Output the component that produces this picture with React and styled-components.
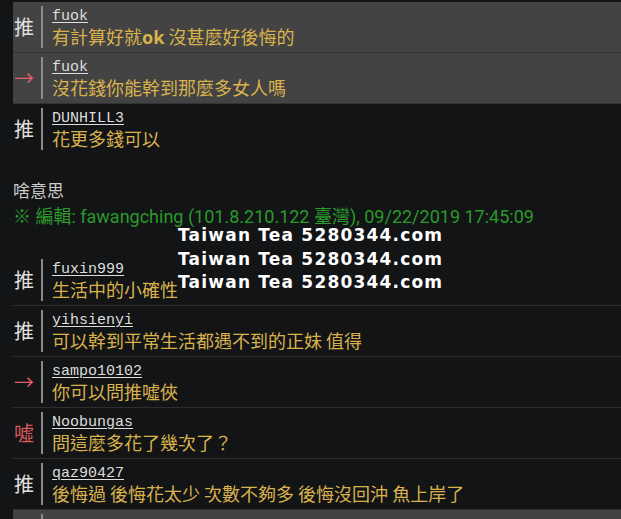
import React from "react";
import styled, { createGlobalStyle } from "styled-components";

const Global = createGlobalStyle`
  html, body { margin: 0; padding: 0; background: #131416; }
  body { overflow: hidden; }
`;

const Page = styled.div`
  position: relative;
  width: 621px;
  height: 519px;
  overflow: hidden;
  padding: 2px 0 0 13px;
  box-sizing: border-box;
  background: #131416;
  font-family: "Noto Sans CJK TC", "Noto Sans", sans-serif;
`;

const Row = styled.div`
  display: flex;
  height: 50px;
  background: ${(p) => (p.$hl ? "#434343" : "transparent")};
  border-bottom: 1px solid ${(p) => (p.$last ? "transparent" : p.$hl ? "#333333" : "#2e2e2e")};
`;

const Tag = styled.div`
  width: 28px;
  display: flex;
  align-items: center;
  padding-left: 1px;
  box-sizing: border-box;
  font-size: 20px;
  line-height: 1;
  color: ${(p) => p.$color};
  font-family: "Noto Sans CJK TC", sans-serif;
`;

const Bar = styled.div`
  width: 2px;
  margin: 4px 0;
  background: #8a8a8a;
`;

const Body = styled.div`
  display: flex;
  flex-direction: column;
  padding: 6px 0 0 9px;
`;

const User = styled.span`
  font-family: "Liberation Mono", monospace;
  font-size: 15px;
  line-height: 17px;
  color: #dddddd;
  text-decoration: underline;
  text-underline-offset: 2px;
  align-self: flex-start;
`;

const Comment = styled.span`
  font-family: "Noto Sans CJK TC", sans-serif;
  font-size: 18px;
  line-height: 23px;
  color: #d9b24c;
  white-space: nowrap;
  b { font-family: "Noto Sans", sans-serif; font-weight: 700; }
`;

const Content = styled.div`
  height: 100px;
  box-sizing: border-box;
  padding-top: 22px;
  font-size: 17px;
  line-height: 26px;
  color: #cccccc;
`;

const EditLine = styled.div`
  font-family: Roboto, "Noto Sans CJK TC", sans-serif;
  font-size: 18px;
  line-height: 27px;
  color: #2a9a2a;
  white-space: nowrap;
`;

const Watermark = styled.div`
  position: absolute;
  left: 178px;
  top: 224px;
  font-family: "DejaVu Sans", sans-serif;
  font-weight: 700;
  font-size: 17px;
  line-height: 23.5px;
  letter-spacing: 1.2px;
  color: #ffffff;
  white-space: nowrap;
`;

const TAGS = {
  push: { t: "推", c: "#e0e0e0" },
  arrow: { t: "→", c: "#e0606a" },
  boo: { t: "噓", c: "#d85a5a" },
  none: { t: "", c: "#e0e0e0" },
};

function Push({ type, user, text, hl, last }) {
  const tg = TAGS[type];
  return (
    <Row $hl={hl} $last={last}>
      <Tag $color={tg.c}>{tg.t}</Tag>
      <Bar />
      <Body>
        {user ? <User>{user}</User> : null}
        {text ? <Comment>{text}</Comment> : null}
      </Body>
    </Row>
  );
}

export default function App() {
  return (
    <>
      <Global />
      <Page>
        <Push type="push" hl user="fuok" text={<>有計算好就<b>ok</b> 沒甚麼好後悔的</>} />
        <Push type="arrow" hl user="fuok" text="沒花錢你能幹到那麼多女人嗎" />
        <Push type="push" last user="DUNHILL3" text="花更多錢可以" />
        <Content>
          <div>啥意思</div>
          <EditLine>※ 編輯: fawangching (101.8.210.122 臺灣), 09/22/2019 17:45:09</EditLine>
        </Content>
        <Push type="push" user="fuxin999" text="生活中的小確性" />
        <Push type="push" user="yihsienyi" text="可以幹到平常生活都遇不到的正妹 值得" />
        <Push type="arrow" user="sampo10102" text="你可以問推噓俠" />
        <Push type="boo" user="Noobungas" text="問這麼多花了幾次了？" />
        <Push type="push" user="qaz90427" text="後悔過 後悔花太少 次數不夠多 後悔沒回沖 魚上岸了" />
        <Push type="none" hl />
        <Watermark>
          <div>Taiwan Tea 5280344.com</div>
          <div>Taiwan Tea 5280344.com</div>
          <div>Taiwan Tea 5280344.com</div>
        </Watermark>
      </Page>
    </>
  );
}
